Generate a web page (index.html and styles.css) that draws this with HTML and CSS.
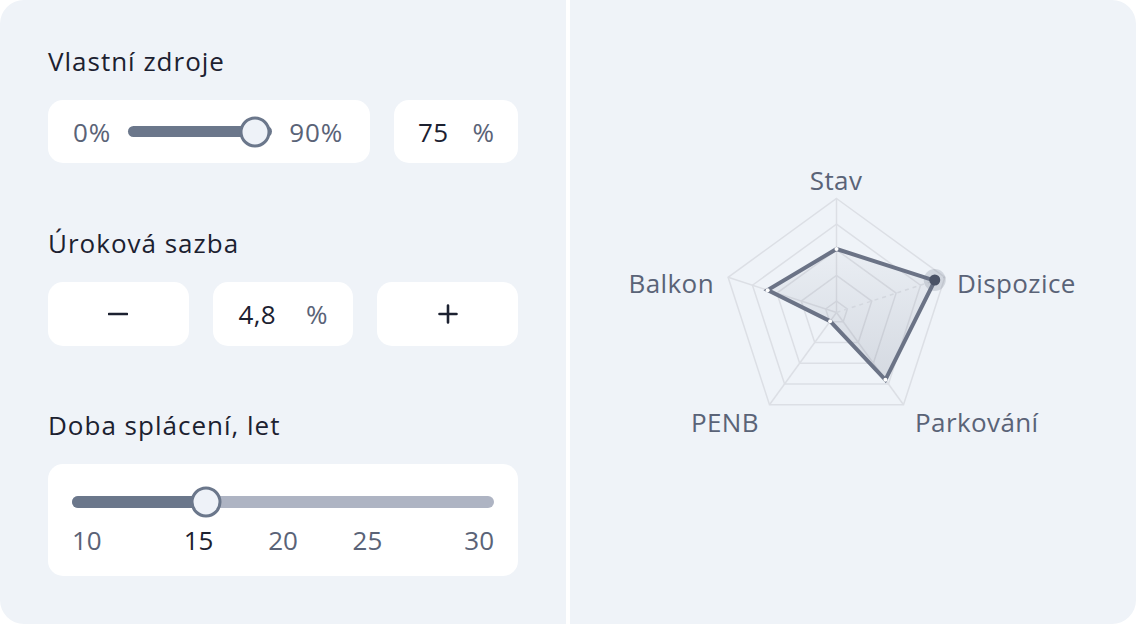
FILE: index.html
```html
<!DOCTYPE html>
<html lang="cs">
<head>
<meta charset="utf-8">
<title>Kalkulačka</title>
<link rel="stylesheet" href="styles.css">
</head>
<body>
<div class="card">
  <div class="panel left">
    <section class="section">
      <h2 class="title">Vlastní zdroje</h2>
      <div class="row row-one">
        <div class="box range-box">
          <span class="muted">0%</span>
          <div class="track track-dark">
            <span class="thumb" style="left: 88%"></span>
          </div>
          <span class="muted">90%</span>
        </div>
        <div class="box value-box value-box-fixed">
          <span class="value">75</span><span class="unit unit-a">%</span>
        </div>
      </div>
    </section>
    <section class="section">
      <h2 class="title">Úroková sazba</h2>
      <div class="row row-three">
        <button class="box btn" aria-label="minus">
          <svg width="20" height="20" viewBox="0 0 20 20"><path d="M1 10h18" stroke="#1c2130" stroke-width="2.6" stroke-linecap="round"/></svg>
        </button>
        <div class="box value-box">
          <span class="value">4,8</span><span class="unit unit-b">%</span>
        </div>
        <button class="box btn" aria-label="plus">
          <svg width="20" height="20" viewBox="0 0 20 20"><path d="M1.5 10h17M10 1.5v17" stroke="#1c2130" stroke-width="2.6" stroke-linecap="round"/></svg>
        </button>
      </div>
    </section>
    <section class="section section-last">
      <h2 class="title">Doba splácení, let</h2>
      <div class="box years-box">
        <div class="track track-light">
          <span class="fill" style="width: 31.75%"></span>
          <span class="thumb" style="left: 31.75%"></span>
        </div>
        <div class="ticks">
          <span class="tick">10</span>
          <span class="tick active">15</span>
          <span class="tick">20</span>
          <span class="tick">25</span>
          <span class="tick">30</span>
        </div>
      </div>
    </section>
  </div>
  <div class="panel right">
    <svg class="radar" width="566" height="624" viewBox="0 0 566 624">
      <defs>
        <linearGradient id="area" x1="0" y1="0" x2="0" y2="1">
          <stop offset="0" stop-color="#6b7386" stop-opacity="0.04"/>
          <stop offset="1" stop-color="#6b7386" stop-opacity="0.2"/>
        </linearGradient>
      </defs>
      <g fill="none" stroke="#dcdfe5" stroke-width="1.5">
        <polygon points="266.5,198.5 374.92,277.27 333.51,404.73 199.49,404.73 158.08,277.27"/>
        <polygon points="266.5,224.15 350.53,285.2 318.43,383.98 214.57,383.98 182.47,285.2"/>
        <polygon points="266.5,249.8 326.13,293.13 303.35,363.22 229.65,363.22 206.87,293.13"/>
        <polygon points="266.5,275.45 301.74,301.05 288.28,342.47 244.72,342.47 231.26,301.05"/>
        <polygon points="266.5,301.1 277.34,308.98 273.2,321.72 259.8,321.72 255.66,308.98"/>
        <line x1="266.5" y1="312.5" x2="266.5" y2="198.5"/>
        <line x1="266.5" y1="312.5" x2="333.51" y2="404.73"/>
        <line x1="266.5" y1="312.5" x2="199.49" y2="404.73"/>
        <line x1="266.5" y1="312.5" x2="158.08" y2="277.27"/>
      </g>
      <polygon points="266.5,249 364.75,280.58 315.4,379.8 260.15,321.24 197.64,290.13" fill="url(#area)"/>
      <line x1="266.5" y1="312.5" x2="374.92" y2="277.27" stroke="#d3d7de" stroke-width="1.5" stroke-dasharray="4 4"/>
      <polygon points="266.5,249 364.75,280.58 315.4,379.8 260.15,321.24 197.64,290.13" fill="none" stroke="#6b7386" stroke-width="4" stroke-linejoin="miter"/>
      <g fill="#ffffff">
        <circle cx="266.5" cy="249" r="2"/>
        <circle cx="315.4" cy="379.8" r="2"/>
        <circle cx="260.15" cy="321.24" r="2"/>
        <circle cx="197.64" cy="290.13" r="2"/>
      </g>
      <circle cx="364.75" cy="280" r="11" fill="#6b7386" fill-opacity="0.22"/>
      <circle cx="364.75" cy="280" r="5.5" fill="#4b5366"/>
      <g class="axis-label">
        <text x="266" y="190" text-anchor="middle">Stav</text>
        <text x="387" y="293" text-anchor="start">Dispozice</text>
        <text x="345" y="431.5" text-anchor="start">Parkování</text>
        <text x="155" y="431.5" text-anchor="middle">PENB</text>
        <text x="144" y="293" text-anchor="end">Balkon</text>
      </g>
    </svg>
  </div>
</div>
</body>
</html>
```

FILE: styles.css
```css
* {
  box-sizing: border-box;
}

html,
body {
  margin: 0;
  padding: 0;
  background: #ffffff;
}

body {
  font-family: "Open Sans", "DejaVu Sans", sans-serif;
  color: #1c2130;
}

.card {
  width: 1136px;
  height: 624px;
  display: grid;
  grid-template-columns: 566px 1fr;
  column-gap: 4px;
  border-radius: 24px;
  overflow: hidden;
}

.panel {
  background: #eff3f8;
  height: 624px;
}

.left {
  padding: 46px 48px 0;
  display: flex;
  flex-direction: column;
}

.section + .section {
  margin-top: 65px;
}

.section-last {
  margin-top: 64px;
}

.section + .section-last {
  margin-top: 64px;
}

.title {
  margin: 0 0 24px;
  font-size: 26px;
  line-height: 30px;
  font-weight: 400;
  letter-spacing: 1px;
  color: #1c2130;
}

.row {
  display: flex;
  gap: 24px;
}

.row-one {
  height: 63px;
}

.row-three {
  display: grid;
  grid-template-columns: repeat(3, 1fr);
  height: 64px;
}

.box {
  background: #ffffff;
  border-radius: 15px;
  border: none;
}

.range-box {
  width: 322px;
  display: flex;
  align-items: center;
  gap: 17px;
  padding: 0 27px 0 25px;
}

.muted {
  font-size: 26px;
  color: #5a6377;
  letter-spacing: 0.8px;
}

.track {
  position: relative;
  flex: 1;
  height: 11px;
  border-radius: 6px;
}

.track-dark {
  background: #6b778b;
}

.track-light {
  background: #aeb4c3;
  height: 12px;
}

.fill {
  position: absolute;
  left: 0;
  top: 0;
  height: 100%;
  border-radius: 6px;
  background: #6b778b;
}

.thumb {
  position: absolute;
  top: 50%;
  width: 31px;
  height: 31px;
  border-radius: 50%;
  transform: translate(-50%, -50%);
  background: #eef2f8;
  border: 3.5px solid #6b778b;
}

.value-box {
  display: flex;
  align-items: center;
  justify-content: center;
}

.value-box-fixed {
  width: 124px;
}

.value {
  font-size: 26px;
  color: #1c2130;
  letter-spacing: 0.3px;
}

.unit {
  font-size: 26px;
  color: #5a6377;
}

.unit-a {
  margin-left: 24px;
}

.unit-b {
  margin-left: 30px;
}

.btn {
  display: flex;
  align-items: center;
  justify-content: center;
  padding: 0;
  cursor: pointer;
}

.years-box {
  height: 112px;
  padding: 32px 24px 0;
}

.ticks {
  margin-top: 18px;
  display: grid;
  grid-template-columns: repeat(5, 1fr);
  font-size: 26px;
  line-height: 28px;
  color: #5a6377;
}

.tick {
  text-align: center;
}

.tick:first-child {
  text-align: left;
}

.tick:last-child {
  text-align: right;
}

.tick.active {
  color: #1c2130;
}

.radar {
  display: block;
}

.axis-label text {
  font-family: "Open Sans", "DejaVu Sans", sans-serif;
  font-size: 26px;
  fill: #5a6377;
  letter-spacing: 0.4px;
}
```
